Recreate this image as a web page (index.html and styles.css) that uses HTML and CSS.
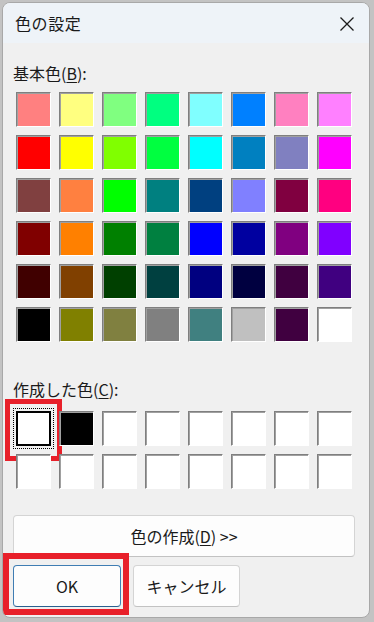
FILE: index.html
```html
<!DOCTYPE html>
<html lang="ja">
<head>
<meta charset="utf-8">
<title>色の設定</title>
<link rel="stylesheet" href="styles.css">
</head>
<body>
<div class="window">
  <div class="titlebar">
    <span class="title">色の設定</span>
    <svg class="close" width="16" height="16" viewBox="0 0 16 16"><path d="M1.5 1.5 L14.5 14.5 M14.5 1.5 L1.5 14.5" stroke="#1b1b1b" stroke-width="1.3" fill="none"/></svg>
  </div>
  <div class="content">
    <div class="label label-basic">基本色(<u>B</u>):</div>
    <div class="grid basic">
      <span class="sw" style="background:#FF8080"></span>
      <span class="sw" style="background:#FFFF80"></span>
      <span class="sw" style="background:#80FF80"></span>
      <span class="sw" style="background:#00FF80"></span>
      <span class="sw" style="background:#80FFFF"></span>
      <span class="sw" style="background:#0080FF"></span>
      <span class="sw" style="background:#FF80C0"></span>
      <span class="sw" style="background:#FF80FF"></span>

      <span class="sw" style="background:#FF0000"></span>
      <span class="sw" style="background:#FFFF00"></span>
      <span class="sw" style="background:#80FF00"></span>
      <span class="sw" style="background:#00FF40"></span>
      <span class="sw" style="background:#00FFFF"></span>
      <span class="sw" style="background:#0080C0"></span>
      <span class="sw" style="background:#8080C0"></span>
      <span class="sw" style="background:#FF00FF"></span>

      <span class="sw" style="background:#804040"></span>
      <span class="sw" style="background:#FF8040"></span>
      <span class="sw" style="background:#00FF00"></span>
      <span class="sw" style="background:#008080"></span>
      <span class="sw" style="background:#004080"></span>
      <span class="sw" style="background:#8080FF"></span>
      <span class="sw" style="background:#800040"></span>
      <span class="sw" style="background:#FF0080"></span>

      <span class="sw" style="background:#800000"></span>
      <span class="sw" style="background:#FF8000"></span>
      <span class="sw" style="background:#008000"></span>
      <span class="sw" style="background:#008040"></span>
      <span class="sw" style="background:#0000FF"></span>
      <span class="sw" style="background:#0000A0"></span>
      <span class="sw" style="background:#800080"></span>
      <span class="sw" style="background:#8000FF"></span>

      <span class="sw" style="background:#400000"></span>
      <span class="sw" style="background:#804000"></span>
      <span class="sw" style="background:#004000"></span>
      <span class="sw" style="background:#004040"></span>
      <span class="sw" style="background:#000080"></span>
      <span class="sw" style="background:#000040"></span>
      <span class="sw" style="background:#400040"></span>
      <span class="sw" style="background:#400080"></span>

      <span class="sw" style="background:#000000"></span>
      <span class="sw" style="background:#808000"></span>
      <span class="sw" style="background:#808040"></span>
      <span class="sw" style="background:#808080"></span>
      <span class="sw" style="background:#408080"></span>
      <span class="sw" style="background:#C0C0C0"></span>
      <span class="sw" style="background:#400040"></span>
      <span class="sw" style="background:#FFFFFF"></span>
    </div>

    <div class="label label-custom">作成した色(<u>C</u>):</div>
    <div class="grid custom">
      <span class="sw sel"><span class="focus"></span><span class="mark"></span></span>
      <span class="sw" style="background:#000000"></span>
      <span class="sw white"></span>
      <span class="sw white"></span>
      <span class="sw white"></span>
      <span class="sw white"></span>
      <span class="sw white"></span>
      <span class="sw white"></span>
      <span class="sw white"></span>
      <span class="sw white"></span>
      <span class="sw white"></span>
      <span class="sw white"></span>
      <span class="sw white"></span>
      <span class="sw white"></span>
      <span class="sw white"></span>
      <span class="sw white"></span>
    </div>

    <button class="btn wide">色の作成(<u>D</u>) &gt;&gt;</button>
    <div class="row">
      <div class="okwrap">
        <button class="btn ok">OK</button>
        <span class="mark mark-ok"></span>
      </div>
      <button class="btn cancel">キャンセル</button>
    </div>
  </div>
</div>
</body>
</html>
```

FILE: styles.css
```css
html, body {
  margin: 0;
  padding: 0;
}
body {
  width: 374px;
  height: 622px;
  background: #c3c3c3;
  padding: 2px 4px 4px 2px;
  box-sizing: border-box;
  font-family: "Noto Sans CJK JP", "Noto Sans", sans-serif;
  color: #1a1a1a;
  overflow: hidden;
}
.window {
  width: 368px;
  height: 616px;
  box-sizing: border-box;
  border: 1px solid #a8a8a8;
  border-radius: 8px;
  background: #f0f0f0;
  overflow: hidden;
  display: flex;
  flex-direction: column;
}
.titlebar {
  height: 40px;
  flex: none;
  background: #eef3f8;
  display: flex;
  align-items: center;
  justify-content: space-between;
  padding: 0 14px 0 12px;
}
.title {
  font-size: 16px;
  letter-spacing: 0.6px;
  line-height: 24px;
}
.close {
  display: block;
  margin-top: 2px;
}
.content {
  padding: 18px 0 0 10px;
  display: flex;
  flex-direction: column;
}
.label {
  font-size: 16px;
  line-height: 24px;
  height: 24px;
}
.label u, .btn u {
  text-decoration-thickness: 1px;
  text-underline-offset: 2px;
}
.grid {
  display: grid;
  grid-template-columns: repeat(8, 35px);
  grid-auto-rows: 35px;
  gap: 8px;
  padding-left: 3px;
}
.basic {
  margin-top: 7px;
}
.label-custom {
  margin-top: 35px;
}
.custom {
  margin-top: 10px;
}
.sw {
  position: relative;
  box-sizing: border-box;
  border-style: solid;
  border-width: 1px 1px 1px 1px;
  border-color: #7f7f7f #ffffff #ffffff #7f7f7f;
  box-shadow: inset 1px 1px 0 #a0a0a0;
}
.white {
  background: #ffffff;
}
.sel {
  background: #ffffff;
  border: 2px solid #000000;
  box-shadow: none;
}
.focus {
  position: absolute;
  left: -5px;
  top: -5px;
  right: -5px;
  bottom: -5px;
  border: 1px dotted #000000;
}
.mark {
  position: absolute;
  left: -13px;
  top: -14px;
  right: -13px;
  bottom: -17px;
  border: 5px solid #e8202a;
  pointer-events: none;
}
.btn {
  font-family: "Noto Sans CJK JP", "Noto Sans", sans-serif;
  font-size: 16px;
  color: #1a1a1a;
  background: #fdfdfd;
  border: 1px solid #d4d4d4;
  border-bottom-color: #c2c2c2;
  border-radius: 4px;
  height: 42px;
  padding: 0;
  box-sizing: border-box;
  line-height: 1;
}
.wide {
  width: 342px;
  margin-top: 26px;
}
.row {
  display: flex;
  gap: 12px;
  margin-top: 8px;
}
.okwrap {
  position: relative;
  width: 108px;
  height: 42px;
}
.ok {
  width: 108px;
  border-color: #3f7db3;
  border-bottom-color: #2a5f8f;
}
.mark-ok {
  left: -10px;
  top: -12px;
  right: -8px;
  bottom: -8px;
  border-width: 6px;
}
.cancel {
  width: 107px;
}
```
